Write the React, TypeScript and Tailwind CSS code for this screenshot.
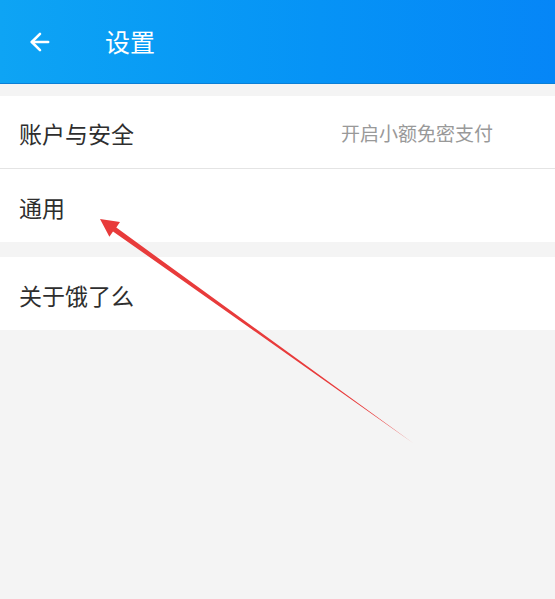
import { ArrowLeft } from "lucide-react";

const font = { fontFamily: '"Noto Sans CJK SC", "Noto Sans", sans-serif' };

function Row({ label, hint, border }: { label: string; hint?: string; border?: boolean }) {
  return (
    <div
      className={`flex h-[73px] items-center justify-between bg-white pl-[19px] pr-[62px] pt-[3px] ${
        border ? "border-b border-[#e4e4e4]" : ""
      }`}
    >
      <span className="text-[23px] text-[#2e2e2e]">{label}</span>
      {hint && <span className="text-[19px] text-[#999]">{hint}</span>}
    </div>
  );
}

export default function App() {
  return (
    <div className="relative h-[599px] w-[555px] overflow-hidden bg-[#f4f4f4]" style={font}>
      <header className="flex h-[84px] items-center border-b border-[#0a7fd6] bg-gradient-to-r from-[#0ea4f4] to-[#0686f7] text-white">
        <ArrowLeft className="ml-[26px] h-[28px] w-[28px]" strokeWidth={2.2} />
        <h1 className="ml-[51px] text-[25px]">设置</h1>
      </header>

      <div className="mt-3">
        <Row label="账户与安全" hint="开启小额免密支付" border />
        <Row label="通用" />
      </div>

      <div className="mt-[15px]">
        <Row label="关于饿了么" />
      </div>

      {/* red pointer drawn over the list */}
      <svg className="pointer-events-none absolute left-0 top-0" width="555" height="599">
        <polygon
          points="100,219 120,222 116.3,227.6 413,443 113,231.4 109.4,236.8"
          fill="#e83b3b"
        />
      </svg>
    </div>
  );
}
